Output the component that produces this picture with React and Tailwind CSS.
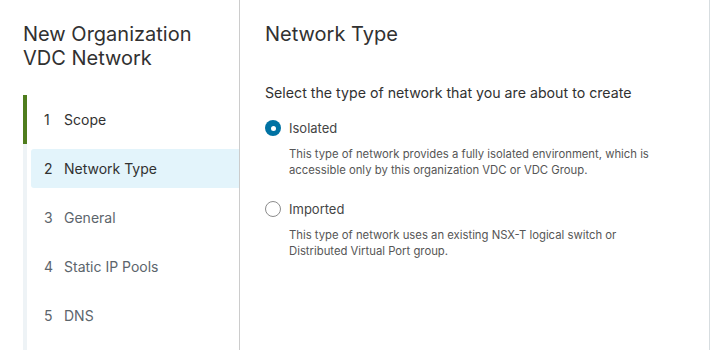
const steps = [
  { n: 1, label: 'Scope' },
  { n: 2, label: 'Network Type' },
  { n: 3, label: 'General' },
  { n: 4, label: 'Static IP Pools' },
  { n: 5, label: 'DNS' },
]

const options = [
  {
    label: 'Isolated',
    checked: true,
    description: 'This type of network provides a fully isolated environment, which is accessible only by this organization VDC or VDC Group.',
  },
  {
    label: 'Imported',
    checked: false,
    description: 'This type of network uses an existing NSX-T logical switch or Distributed Virtual Port group.',
  },
]

function Radio({ checked }) {
  if (checked) {
    return (
      <span className="flex h-4 w-4 shrink-0 items-center justify-center rounded-full bg-[#0072a3]">
        <span className="h-[5px] w-[5px] rounded-full bg-white" />
      </span>
    )
  }
  return <span className="h-4 w-4 shrink-0 rounded-full border border-[#8c8c8c] bg-white" />
}

function App() {
  return (
    <div className="flex h-[350px] w-[710px] bg-white font-['Inter',sans-serif] text-[#313131]">
      <aside className="flex w-[240px] shrink-0 flex-col border-r border-[#cccccc] pl-[23px]">
        <h1 className="mt-[22px] text-[20px] font-normal leading-[24px] text-[#313131]">
          New Organization
          <br />
          VDC Network
        </h1>
        <nav className="mt-[25px] flex flex-1 flex-col border-l-4 border-[#eef3f6]">
          {steps.map((step) => {
            const active = step.n === 1
            const current = step.n === 2
            return (
              <div
                key={step.n}
                className={
                  active
                    ? '-ml-1 flex h-[49px] items-center border-l-4 border-[#4f7d1d] pl-[17px] text-[14px] text-[#313131]'
                    : 'flex h-[49px] items-center py-[5px] pl-1 text-[14px]'
                }
              >
                {current ? (
                  <div className="flex h-full flex-1 items-center rounded-l-[3px] bg-[#e3f4fb] pl-[13px] text-[#313131]">
                    <span className="w-5">{step.n}</span>
                    <span>{step.label}</span>
                  </div>
                ) : active ? (
                  <>
                    <span className="w-5">{step.n}</span>
                    <span>{step.label}</span>
                  </>
                ) : (
                  <div className="flex items-center pl-[13px] text-[#5c656c]">
                    <span className="w-5">{step.n}</span>
                    <span>{step.label}</span>
                  </div>
                )}
              </div>
            )
          })}
        </nav>
      </aside>

      <main className="flex-1 border-r border-[#d7dde0] pl-[25px] pr-4">
        <h2 className="mt-[22px] text-[20px] font-normal leading-[24px] text-[#313131]">Network Type</h2>
        <p className="mt-[37px] text-[14.2px] leading-[20px] text-[#313131]">
          Select the type of network that you are about to create
        </p>
        <div className="mt-[16px] flex flex-col gap-[22px]">
          {options.map((opt) => (
            <div key={opt.label}>
              <div className="flex items-center gap-2">
                <Radio checked={opt.checked} />
                <span className="text-[13px] leading-[18px] text-[#454545]">{opt.label}</span>
              </div>
              <p className="mt-[10px] w-[400px] pl-[24px] text-[11.3px] leading-[15.5px] text-[#565656]">
                {opt.description}
              </p>
            </div>
          ))}
        </div>
      </main>
    </div>
  )
}

export default App
